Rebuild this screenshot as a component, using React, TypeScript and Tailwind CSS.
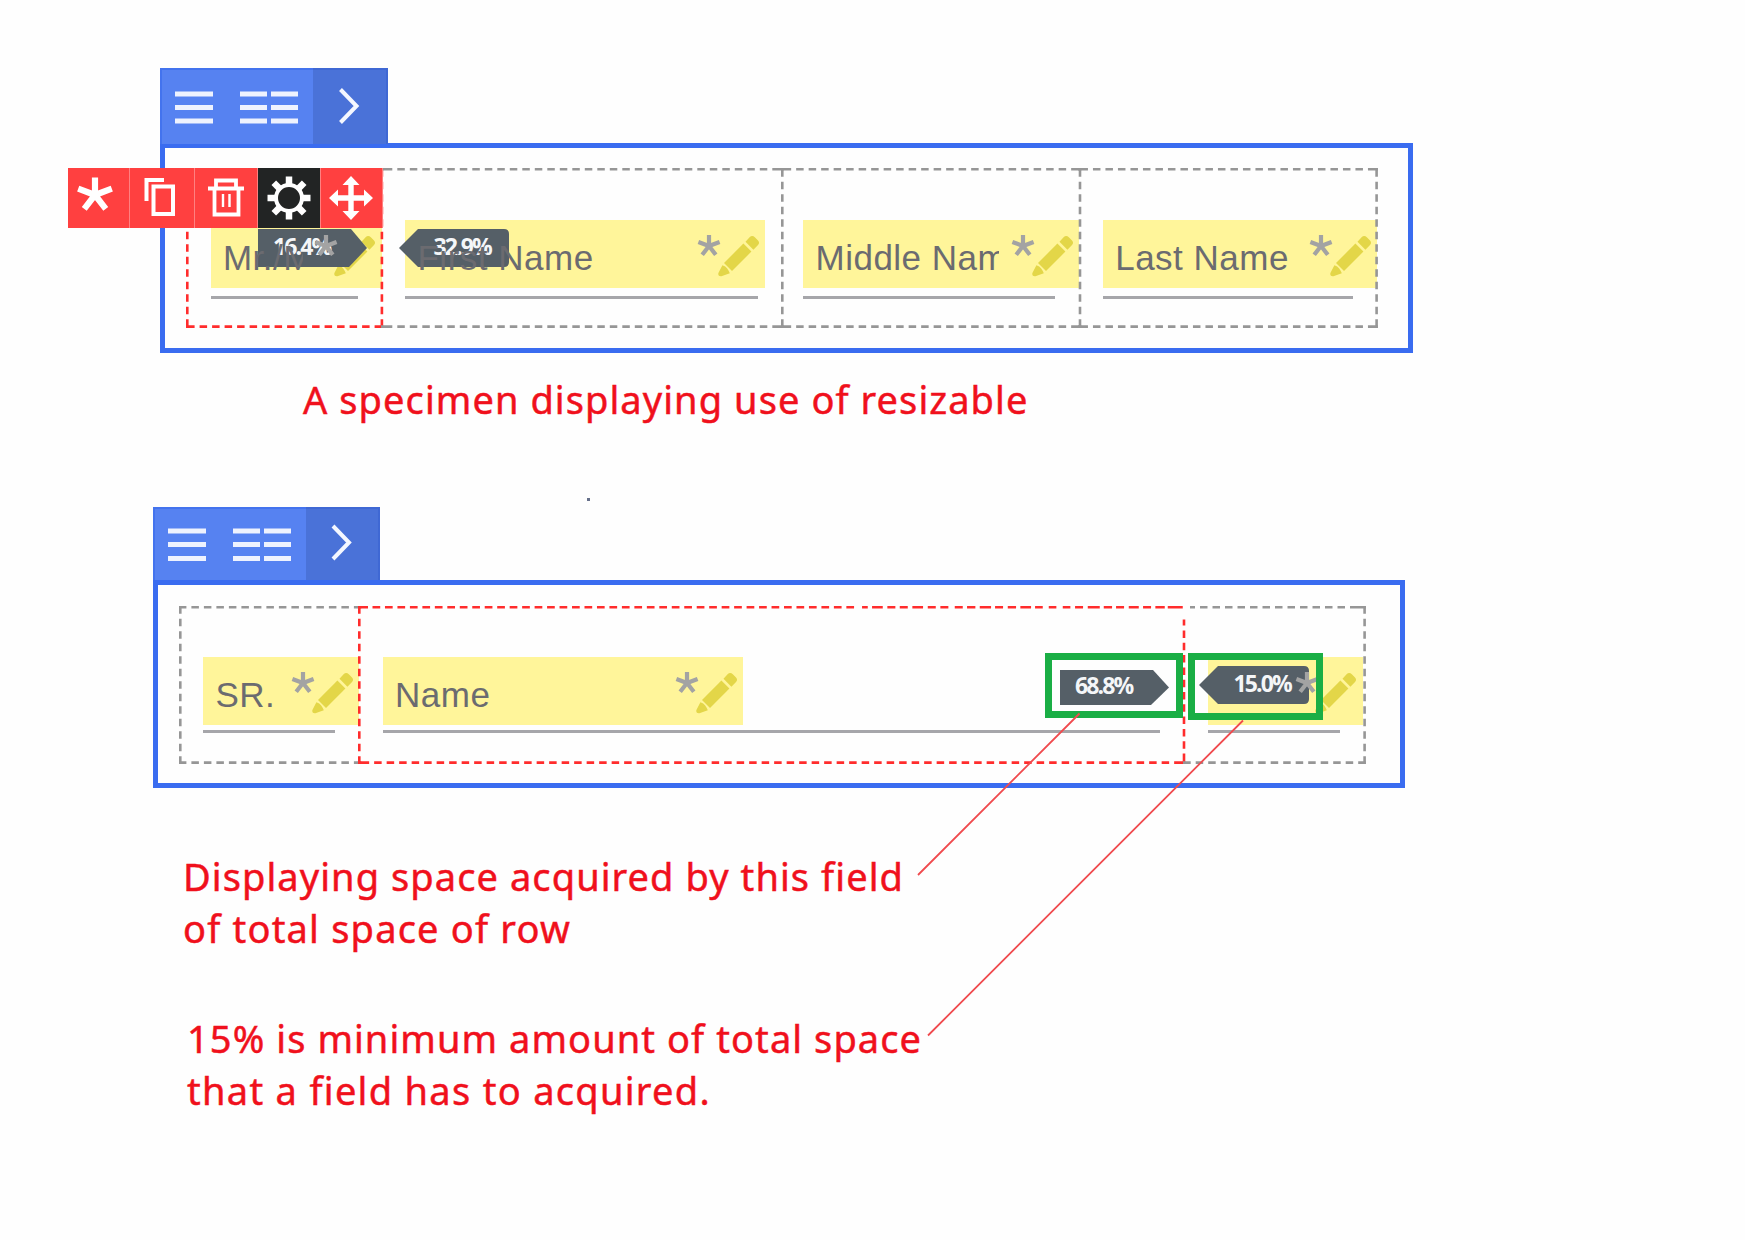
import type { ReactNode } from "react";

const DASH = 7.5;
const GAP = 5;

// Dashes fitted so that both ends close on a solid corner.
function fitted(length: number) {
  const n = Math.round((length - 25) / (DASH + GAP));
  const corner = (length - GAP - n * (DASH + GAP)) / 2;
  const parts = [corner, GAP];
  for (let i = 0; i < n; i++) parts.push(DASH, GAP);
  parts.push(corner);
  return parts.join(" ");
}

type Side = { skip?: number; dashes?: string };

function DashedFrame({
  w,
  h,
  color,
  top = {},
  left = {},
  right = {},
  hide = "",
}: {
  w: number;
  h: number;
  color: string;
  top?: Side;
  left?: Side;
  right?: Side;
  hide?: string;
}) {
  const line = (key: string, x1: number, y1: number, x2: number, y2: number, len: number, s: Side) =>
    hide.includes(key) ? null : (
      <line x1={x1} y1={y1} x2={x2} y2={y2} strokeDasharray={s.dashes ?? fitted(len)} />
    );
  return (
    <svg
      className="pointer-events-none absolute -left-[1.3px] -top-[1.3px] overflow-visible"
      width={w}
      height={h}
      fill="none"
      stroke={color}
      strokeWidth={2.6}
    >
      {line("t", top.skip ?? 0, 1.3, w + 2.6, 1.3, w + 2.6, top)}
      {line("b", 0, h + 1.3, w + 2.6, h + 1.3, w + 2.6, {})}
      {line("l", 1.3, left.skip ?? 0, 1.3, h + 2.6, h + 2.6, left)}
      {line("r", w + 1.3, right.skip ?? 0, w + 1.3, h + 2.6, h + 2.6, right)}
    </svg>
  );
}

function Asterisk({ className = "", size = 24, color = "#a3a3a3", width = 4.2 }) {
  return (
    <svg className={className} width={size} height={size} viewBox="-12 -12 24 24" stroke={color} strokeWidth={width}>
      <path d="M0 0V-11M0 0L-10.6 -4M0 0L10.6 -4M0 0L-6.8 8.8M0 0L6.8 8.8" fill="none" />
    </svg>
  );
}

function Pencil({ className = "" }) {
  return (
    <svg className={className} width="42" height="42" viewBox="0 0 42 42" fill="#e3d648">
      <path d="M27.5 6.8 31.6 2.2Q34.2 -.4 36.8 2.2L39.8 5.2Q42.3 7.8 39.8 10.3L35.4 14.8Z" />
      <path d="M25.4 8.6 33.4 16.6 14 36 6 28Z" />
      <path d="M4.4 30.2Q7.6 31.2 9.2 33.4 10.8 35.6 11.8 38.2L3.4 41.2Q-.4 41.6 .4 38Z" />
    </svg>
  );
}

function RowTools({ dy, chevron, className }: { dy: number[]; chevron: string; className: string }) {
  return (
    <div
      className={`relative z-10 flex overflow-hidden bg-[#5682f1] shadow-[inset_0_2px_0_#4373ee,inset_2px_0_0_#4373ee] ${className}`}
    >
      <svg className="h-[76px] w-[153px] shrink-0" viewBox="0 0 153 76" stroke="#eef2fe" strokeWidth="5" fill="none">
        {dy.map((y) => (
          <path key={y} d={`M15 ${y}H53M80 ${y}H107M111 ${y}H138`} />
        ))}
      </svg>
      <div className="flex-1 bg-[#4a72d8] shadow-[inset_0_2px_0_#3f68d4,inset_-2px_0_0_#3f68d4]">
        <svg width="74" height="76" viewBox="0 0 74 76" fill="none" stroke="#f4f7ff" strokeWidth="4">
          <path d={chevron} />
        </svg>
      </div>
    </div>
  );
}

function Field({
  label,
  box,
  underline,
  clip,
}: {
  label: string;
  box: string;
  underline: string;
  clip?: string;
}) {
  return (
    <div className="ml-[23.5px] pt-[50.5px]">
      <div className={`relative flex h-[68px] items-center bg-[#fff59a] ${box}`}>
        <span
          className={`relative z-20 ml-[12px] mt-[8px] overflow-hidden whitespace-nowrap font-['Liberation_Sans'] text-[35px] leading-[42px] tracking-[0.5px] text-[#6b6b70] ${clip ?? ""}`}
        >
          {label}
        </span>
        <Asterisk className="absolute right-[44px] top-[14px] z-20" />
        <Pencil className="absolute right-[5.5px] top-[14.5px]" />
      </div>
      <div className={`h-[3px] bg-[#a6a6aa] ${underline}`} />
    </div>
  );
}

function Badge({ text, dir, className, h = 38 }: { text: string; dir: "l" | "r"; className: string; h?: number }) {
  return (
    <div className={`absolute z-10 flex w-[110px] items-center ${className}`}>
      <svg className="absolute inset-0" width="110" height={h} viewBox={`0 0 110 ${h}`} fill="#555f67">
        {dir === "r" ? (
          <path d={`M0 0H93L109 ${h / 2}L91 ${h}H0Z`} />
        ) : (
          <path d={`M0 ${h / 2}L19 0H105Q110 0 110 5V${h - 5}Q110 ${h} 105 ${h}H19Z`} />
        )}
      </svg>
      <span
        className={`relative -mt-[3px] font-['Open_Sans'] text-[23px] font-bold leading-none tracking-[-1.9px] text-[#f4f6f8] ${
          dir === "r" ? "ml-[15px]" : "ml-[35px]"
        }`}
      >
        {text}
      </span>
    </div>
  );
}

function Cell({ children, className = "" }: { children?: ReactNode; className?: string }) {
  return (
    <div className={`flex h-[60px] items-center justify-center border-r-[1.5px] border-[#ff8080] ${className}`}>
      {children}
    </div>
  );
}

function FieldTools() {
  return (
    <div className="absolute left-[67.5px] top-[167.5px] z-30 flex bg-[#ff4040]">
      <Cell className="w-[62px]">
        <Asterisk className="mr-[6px] -mt-[6px]" size={38} color="#fff" width={3.9} />
      </Cell>
      <Cell className="w-[65px]">
        <svg className="-ml-[4px] -mt-[2px]" width="34" height="42" viewBox="0 0 34 42" fill="none" stroke="#fff" strokeWidth="4">
          <path d="M3.5 25V4H21" />
          <path d="M10.5 10.5H30V38H10.5Z" />
        </svg>
      </Cell>
      <Cell className="w-[63px]">
        <svg className="-mt-[1px]" width="38" height="42" viewBox="0 0 38 42" fill="none" stroke="#fff" strokeWidth="3.8">
          <path d="M1 12.5H37M9 11V4.5H29V11M7.5 13V38.5H31.5V13" />
          <path d="M16 18V31M22.5 18V31" strokeWidth="2.4" />
        </svg>
      </Cell>
      <Cell className="w-[63px] bg-[#222424]">
        <svg width="44" height="44" viewBox="-22 -22 44 44" fill="none" stroke="#fff">
          <circle r="13" strokeWidth="4" />
          {[0, 45, 90, 135, 180, 225, 270, 315].map((a) => (
            <path key={a} d="M0 -14V-21.5" strokeWidth="6.5" transform={`rotate(${a})`} />
          ))}
        </svg>
      </Cell>
      <Cell className="w-[62px]">
        <svg width="44" height="44" viewBox="-22 -22 44 44" fill="#fff">
          <path d="M-2.7 -15H2.7V-2.7H15V2.7H2.7V15H-2.7V2.7H-15V-2.7H-2.7Z" />
          <path d="M0 -22 8.5 -13H-8.5ZM0 22 8.5 13H-8.5ZM-22 0 -13 -8.5V8.5ZM22 0 13 -8.5V8.5Z" />
        </svg>
      </Cell>
    </div>
  );
}

const NOTE =
  "whitespace-nowrap font-['Noto_Sans'] text-[38px] leading-[52px] tracking-[1.08px] text-[#f0101c] [-webkit-text-stroke:0.5px_#f0101c]";
const GRAY = "#969696";
const RED = "#ff2c2c";

// Uneven run of dashes along the top of the selected middle column.
const topRun = (() => {
  const parts = [10, 4.5];
  for (let x = 372.3; x < 850; x += 12.47) parts.push(7.7, 4.77);
  parts[parts.length - 1] = 8;
  parts.push(
    5.7, 4.3, 10.7, 4.6, 8, 4.4, 8, 4.6, 10.7, 4.7, 8, 4.6, 8, 6.4, 8, 4.3, 8.3, 4.4, 11.3, 4, 8, 4.7, 8.3, 4.3, 10.7, 4,
    7.7, 6, 7.6, 6.4, 7.6, 4.7, 8, 4.7, 12, 4, 8.3, 4, 8, 4.7, 10, 4.3, 8, 4.3, 9.4, 3, 15, 40,
  );
  return parts.join(" ");
})();

const lateTop = "5 5 " + "7.5 5 ".repeat(12) + "12 0";

export default function App() {
  return (
    <main className="relative h-[1240px] w-[1745px] overflow-hidden bg-[#fefefe]">
      <section className="ml-[160px] pt-[67.5px]">
        <RowTools className="h-[76px] w-[228px]" dy={[26, 39.5, 53]} chevron="M27.5 21.5 43.5 38 27.5 54.5" />
        <div className="-mt-px flex h-[210.5px] w-[1253px] border-[5px] border-[#3a6cf0] pl-[22.4px] pt-[22.2px]">
          <div className="relative h-[157.3px] w-[194.6px]">
            <Field label="Mr./M" box="w-[171px]" underline="mt-[7.5px] w-[147px]" clip="w-[80px]" />
            <DashedFrame w={194.6} h={157.3} color={RED} />
          </div>
          <div className="relative w-[400px]">
            <Field label="First Name" box="w-[360px]" underline="mt-[7.5px] w-[353px]" />
            <DashedFrame w={400} h={157.3} color={GRAY} hide="l" />
          </div>
          <div className="relative w-[297.7px]">
            <Field
              label="Middle Name"
              box="-ml-[2px] w-[276px]"
              underline="-ml-[2px] mt-[7.5px] w-[252px]"
              clip="w-[184px]"
            />
            <DashedFrame w={297.7} h={157.3} color={GRAY} hide="l" />
          </div>
          <div className="relative w-[297.3px]">
            <Field label="Last Name" box="w-[274px]" underline="mt-[7.5px] w-[250px]" />
            <DashedFrame w={297.3} h={157.3} color={GRAY} hide="l" />
          </div>
        </div>
      </section>

      <p className={`ml-[303px] mt-[20px] ${NOTE}`}>A specimen displaying use of resizable</p>
      <div className="ml-[587px] mt-[73px] size-[3px] bg-[#66708a]" />

      <section className="ml-[152.7px] mt-[6.3px]">
        <RowTools className="h-[73px] w-[227px]" dy={[24, 37.5, 51.5]} chevron="M27 19 43 35.5 27 52" />
        <div className="flex h-[207.3px] w-[1252.5px] border-[5px] border-[#3a6cf0] pl-[22.2px] pt-[21.5px]">
          <div className="relative h-[155.3px] w-[179.7px]">
            <Field label="SR." box="w-[156px]" underline="mt-[5px] w-[132px]" />
            <DashedFrame w={179.7} h={155.3} color={GRAY} hide="r" />
          </div>
          <div className="relative w-[824.7px]">
            <Field label="Name" box="w-[360px]" underline="mt-[5px] w-[777px]" />
            <DashedFrame
              w={824.7}
              h={155.3}
              color={RED}
              top={{ dashes: topRun }}
              right={{ skip: 13.5, dashes: "6 5 " + "7.5 4.8 ".repeat(10) + "12 0" }}
            />
          </div>
          <div className="relative w-[180.3px]">
            <Field label="" box="w-[155px]" underline="mt-[5px] w-[132px]" />
            <DashedFrame w={180.3} h={155.3} color={GRAY} hide="l" top={{ skip: 7, dashes: lateTop }} />
          </div>
        </div>
      </section>

      <p className={`ml-[183px] mt-[62px] ${NOTE}`}>
        Displaying space acquired by this field
        <br />
        <span className="tracking-[1.2px]">of total space of row</span>
      </p>
      <p className={`ml-[187px] mt-[58px] ${NOTE}`}>
        15% is minimum amount of total space
        <br />
        <span className="tracking-[1.3px]">that a field has to acquired.</span>
      </p>

      <FieldTools />
      <Badge text="16.4%" dir="r" className="left-[258px] top-[229px] h-[38px]" />
      <Badge text="32.9%" dir="l" className="left-[398.5px] top-[228.5px] h-[38px]" />
      <Badge text="68.8%" dir="r" className="left-[1060px] top-[669.5px] h-[35px]" h={35} />
      <Badge text="15.0%" dir="l" className="left-[1198.5px] top-[666px] h-[38px]" />
      <div className="absolute left-[1045px] top-[652.5px] z-20 h-[65.5px] w-[138px] border-[7.5px] border-[#1aae45]" />
      <div className="absolute left-[1187.7px] top-[652.5px] z-20 h-[67.5px] w-[135.5px] border-[7.5px] border-[#1aae45]" />
      <svg
        className="pointer-events-none absolute inset-0 z-30"
        width="1745"
        height="1240"
        stroke="#f04a4e"
        strokeWidth="1.8"
        fill="none"
      >
        <path d="M1079.5 713.5 918 875M1243 720.5 928 1035.5" />
      </svg>
    </main>
  );
}
